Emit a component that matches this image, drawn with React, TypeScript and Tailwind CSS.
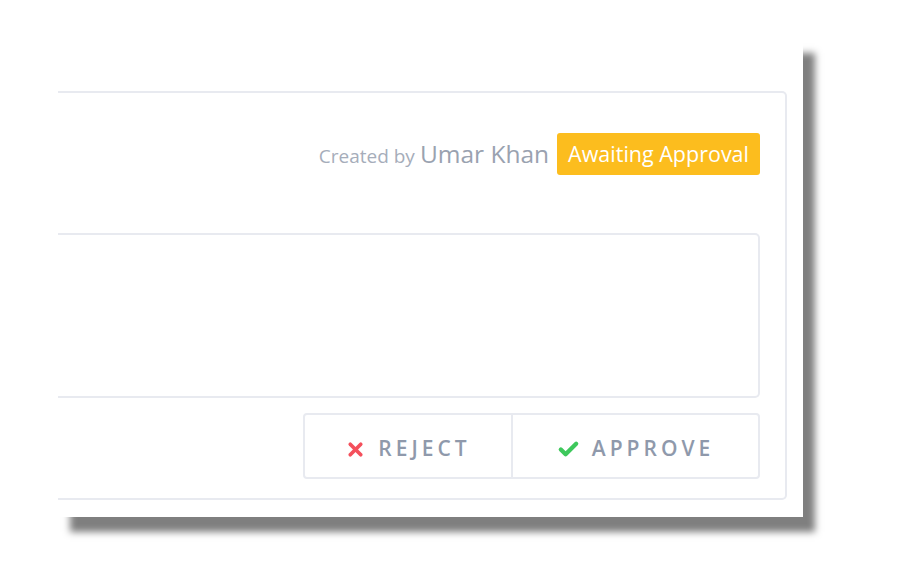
import { X, Check } from "lucide-react";

export default function App() {
  return (
    <div
      className="min-h-screen bg-white pl-[58px] pt-[38px]"
      style={{ fontFamily: '"Open Sans", "Noto Sans", sans-serif' }}
    >
      {/* paper */}
      <div className="h-[479px] w-[745px] bg-white pr-[16px] pt-[53px] shadow-[12px_15px_7px_rgba(0,0,0,0.5)]">
        <div className="flex h-[409px] flex-col rounded-r-[5px] border-y-2 border-r-2 border-[#e8eaf0] pr-[25px]">
          <div className="mt-[40px] flex h-[42px] items-center justify-end">
            <span className="mr-[8px] flex items-baseline gap-[5px] text-[#a6adba]">
              <span className="text-[19px]">Created by</span>
              <span className="text-[24.5px] text-[#9aa2b0]">Umar Khan</span>
            </span>
            <span className="flex h-[42px] items-center rounded-[3px] bg-[#fcbd1e] px-[11px] text-[21.5px] text-white">
              Awaiting Approval
            </span>
          </div>

          <div className="mt-[58px] h-[165px] rounded-r-[5px] border-y-2 border-r-2 border-[#e8eaf0]" />

          <div className="mt-[15px] flex justify-end">
            <div className="flex h-[66px] rounded-[4px] border-2 border-[#e8eaf0]">
              <button className="flex w-[208px] items-center justify-center gap-[12px] border-r-2 border-[#e8eaf0] pt-[6px]">
                <X className="h-[21px] w-[21px] text-[#f4505c]" strokeWidth={4.2} />
                <span className="text-[21px] font-semibold tracking-[4px] text-[#8f99ab]">REJECT</span>
              </button>
              <button className="flex w-[245px] items-center justify-center gap-[12px] pt-[6px]">
                <Check className="h-[23px] w-[23px] text-[#3ec85c]" strokeWidth={4.5} />
                <span className="text-[21px] font-semibold tracking-[4px] text-[#8f99ab]">APPROVE</span>
              </button>
            </div>
          </div>
        </div>
      </div>
    </div>
  );
}
